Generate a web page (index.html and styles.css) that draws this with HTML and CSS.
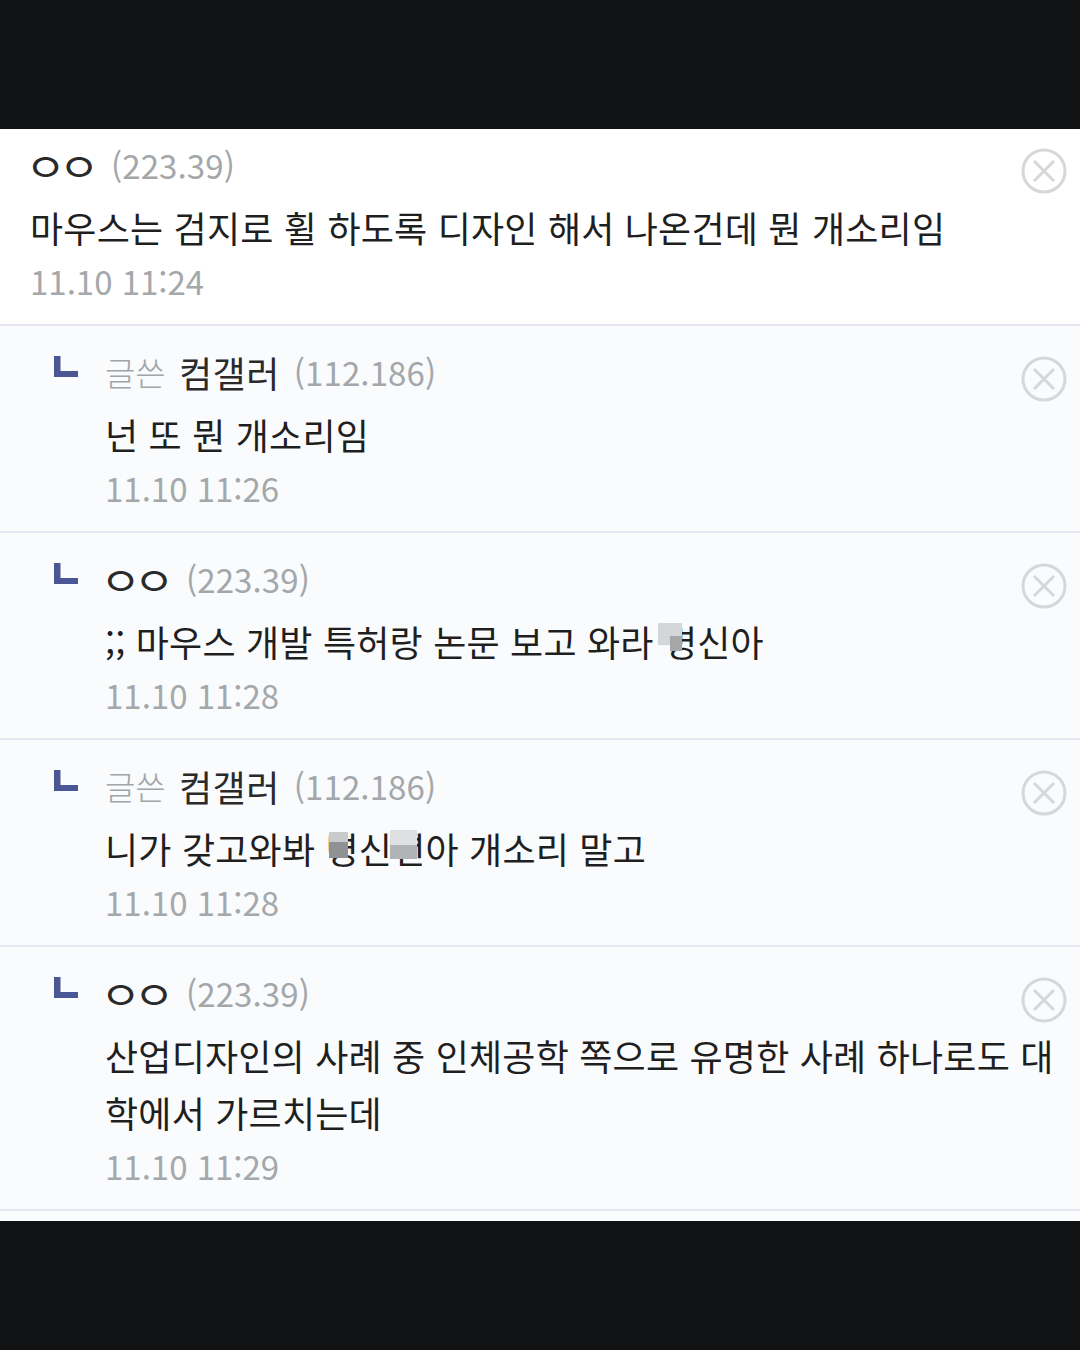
FILE: index.html
```html
<!DOCTYPE html>
<html lang="ko">
<head>
    <meta charset="utf-8">
    <title>댓글</title>
    <link rel="stylesheet" href="styles.css">
</head>
<body>
    <svg class="defs">
        <symbol id="del" viewBox="0 0 46 46">
            <circle cx="23" cy="23" r="21" fill="none" stroke="#d6d7d8" stroke-width="3"/>
            <path d="M13 13 L33 33 M33 13 L13 33" fill="none" stroke="#d6d7d8" stroke-width="3"/>
        </symbol>
        <symbol id="reply" viewBox="0 0 24 21">
            <path d="M0 0 H6.500 V15 H24 V21 H0 Z" fill="#4b5794"/>
        </symbol>
    </svg>

    <main class="comments">
        <div class="comment first">
            <div class="meta"><b class="nick dots">ㅇㅇ</b><span class="ip">(223.39)</span></div>
            <p class="text">마우스는 검지로 휠 하도록 디자인 해서 나온건데 뭔 개소리임</p>
            <div class="date">11.10 11:24</div>
            <svg class="del"><use href="#del"/></svg>
        </div>

        <div class="comment reply">
            <svg class="arrow"><use href="#reply"/></svg>
            <div class="meta"><span class="op">글쓴</span> <b class="nick">컴갤러</b><span class="ip">(112.186)</span></div>
            <p class="text">넌 또 뭔 개소리임</p>
            <div class="date">11.10 11:26</div>
            <svg class="del"><use href="#del"/></svg>
        </div>

        <div class="comment reply">
            <svg class="arrow"><use href="#reply"/></svg>
            <div class="meta"><b class="nick dots">ㅇㅇ</b><span class="ip">(223.39)</span></div>
            <p class="text">;; 마우스 개발 특허랑 논문 보고 와라 <span class="masked">병<i class="mosaic one"></i></span>신아</p>
            <div class="date">11.10 11:28</div>
            <svg class="del"><use href="#del"/></svg>
        </div>

        <div class="comment reply">
            <svg class="arrow"><use href="#reply"/></svg>
            <div class="meta"><span class="op">글쓴</span> <b class="nick">컴갤러</b><span class="ip">(112.186)</span></div>
            <p class="text">니가 갖고와봐 <span class="masked">병<i class="mosaic two"></i></span>신<span class="masked">년<i class="mosaic three"></i></span>아 개소리 말고</p>
            <div class="date">11.10 11:28</div>
            <svg class="del"><use href="#del"/></svg>
        </div>

        <div class="comment reply last">
            <svg class="arrow"><use href="#reply"/></svg>
            <div class="meta"><b class="nick dots">ㅇㅇ</b><span class="ip">(223.39)</span></div>
            <p class="text">산업디자인의 사례 중 인체공학 쪽으로 유명한 사례 하나로도 대학에서 가르치는데</p>
            <div class="date">11.10 11:29</div>
            <svg class="del"><use href="#del"/></svg>
        </div>
    </main>
</body>
</html>
```

FILE: styles.css
```css
html, body { margin: 0; height: 1350px; background: #111213; overflow: hidden; }
body { font-family: "Noto Sans CJK KR", "Noto Sans", sans-serif; padding-top: 129px; box-sizing: border-box; }
.defs { display: none; }

.comments { background: #fbfcfe; padding-bottom: 10px; }
.comment { position: relative; padding: 24px 20px 23px 105px; background: #f9fbfd; border-bottom: 2px solid #e6e6f2; }
.comment.first { padding: 14px 20px 23px 30px; background: #fff; }

.meta { height: 44px; line-height: 44px; font-size: 33px; white-space: nowrap; }
.nick { vertical-align: top; margin-left: 1px; font-weight: 400; font-size: 36px; color: #2a2a2a; letter-spacing: 0.5px; }
/* the two round jamo are drawn wider than the font has them */
.nick.dots { display: inline-block; width: 72px; font-size: 40px; letter-spacing: -6.9px; transform: scaleX(1.12); transform-origin: left center; margin-left: -5px; }
.ip { color: #a4a7aa; font-weight: 400; letter-spacing: 0.1px; margin-left: 14px; }
.op { color: #a2a5a8; font-weight: 300; margin-right: 3px; }

.text { margin: 12px 0 0; font-size: 36px; letter-spacing: 0.2px; line-height: 57px; color: #1f1f1f; }
.date { margin-top: 5px; height: 40px; line-height: 40px; font-size: 33px; font-weight: 400; color: #a5a8ab; }

.del { position: absolute; top: 30px; right: 13px; width: 46px; height: 46px; }
.comment.first .del { top: 19px; }
.arrow { position: absolute; left: 54px; top: 30px; width: 24px; height: 21px; }

/* censored syllables */
.masked { position: relative; }
.mosaic { position: absolute; display: block; }
.mosaic.one {
    left: -6px; top: 8px; width: 24px; height: 28px;
    background:
        linear-gradient(#a5a7a9, #a5a7a9) right 13px / 12px 15px no-repeat,
        linear-gradient(#d5d6d8, #d5d6d8) right top / 12px 13px no-repeat,
        linear-gradient(#d5d6d8, #d5d6d8) left top / 12px 22px no-repeat;
}
.mosaic.two { left: 4px; top: 10px; width: 19px; height: 26px; background: linear-gradient(180deg, #c9cacc 38%, #8f9193 38%); }
.mosaic.three { left: -2px; top: 8px; width: 27px; height: 29px; background: linear-gradient(180deg, #dfe0e2 50%, #b1b3b5 50%); }
```
